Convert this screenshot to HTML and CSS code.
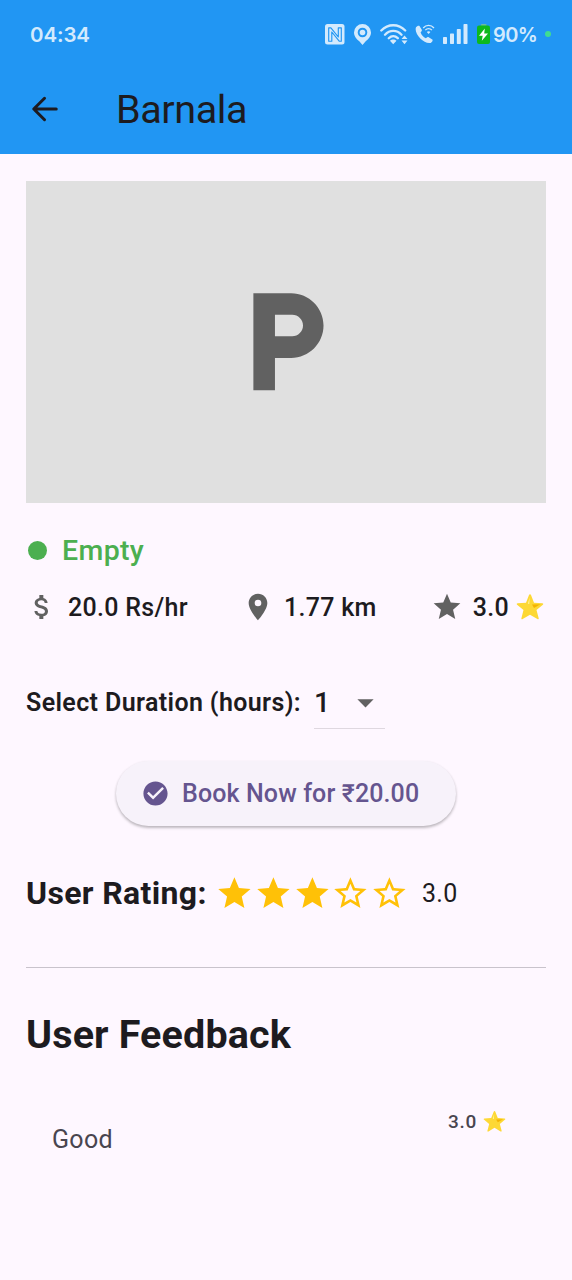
FILE: index.html
```html
<!DOCTYPE html>
<html lang="en">
<head>
<meta charset="utf-8">
<title>Barnala</title>
<link rel="stylesheet" href="styles.css">
</head>
<body>
<svg class="defs" width="0" height="0" aria-hidden="true">
  <defs>
    <symbol id="star" viewBox="0 0 24 24"><path d="M12 17.27 18.18 21l-1.64-7.03L22 9.24l-7.19-.61L12 2 9.19 8.63 2 9.24l5.46 4.73L5.82 21z"/></symbol>
    <symbol id="star-outline" viewBox="0 0 24 24"><path d="m22 9.24-7.19-.62L12 2 9.19 8.63 2 9.24l5.46 4.73L5.82 21 12 17.27 18.18 21l-1.63-7.03L22 9.24zM12 15.4l-3.76 2.27 1-4.28-3.32-2.88 4.38-.38L12 6.1l1.71 4.04 4.38.38-3.32 2.88 1 4.28L12 15.4z"/></symbol>
    <symbol id="gold-star" viewBox="0 0 28 28">
      <path d="M14 1.2c.5 0 .8.3 1 .8l3 7.7 8.3.5c1 .1 1.3.9.6 1.5l-6.4 5.3 2.2 8.2c.2.9-.5 1.400-1.300.9L14 21.700l-7.300 4.400c-.8.5-1.600 0-1.300-.9l2.100-8.200L1.100 11.700c-.7-.6-.4-1.400.6-1.500l8.300-.5 3-7.700c.2-.5.5-.8 1-.8z" fill="#fdd835"/>
      <path d="M16 11.500 24.500 11.200 18 15z" fill="#f4b400"/>
      <path d="m13.600 4.500-1.700 6.200 1.400.2z" fill="#fff59d"/>
    </symbol>
  </defs>
</svg>
<header class="header">
  <div class="status">
    <span class="time">04:34</span>
    <div class="status-icons">
      <svg class="nfc" width="20" height="21" viewBox="0 0 20 21"><rect width="19.500" height="20.500" rx="2.500" fill="#d3eafd"/><path d="M6.800 17.200H3.700V3.800h2.200l7.400 9.200V3.800h3v13.400h-2.100L6.800 8z" fill="none" stroke="#2196f3" stroke-width="1.150" stroke-linejoin="round"/></svg>
      <svg class="place" width="17" height="21" viewBox="0 0 17 21"><path fill="#d3eafd" fill-rule="evenodd" d="M8.500 0A8.500 8.500 0 0 0 0 8.500c0 4 3 7 5.300 8.800L8.500 21l3.200-3.700C14 15.500 17 12.500 17 8.500A8.500 8.500 0 0 0 8.500 0zm0 3.700a4.800 4.800 0 1 1 0 9.600 4.800 4.800 0 0 1 0-9.600z"/><circle cx="8.500" cy="8.500" r="2.800" fill="#d3eafd"/></svg>
      <svg class="wifi" width="28" height="21" viewBox="0 0 28 21"><g fill="none" stroke="#d3eafd" stroke-width="2.300" stroke-linecap="round"><path d="M1.300 6.500C8-.5 18.500-.5 25.200 6.500M5 10.700c4.800-5 11.800-5 16.500 0M8.800 14.200c2.700-2.700 6.200-2.700 9 0"/></g><path d="m13.200 20.300-3.300-3.500c1.900-1.900 4.700-1.900 6.600 0zM21.500 15l3-3.600 3 3.600zM21.500 16.600l3 3.600 3-3.600z" fill="#d3eafd"/></svg>
      <svg class="call" width="20" height="20" viewBox="0 0 20 20"><path fill="#d3eafd" d="M1 3.200C2 1.800 3.800 1.200 4.500 2l2.300 3.700c.5.800-.7 2-1.200 2.600.8 2.700 2.600 4.800 5.300 6 .8-.7 2-1.700 2.800-1.100l3.600 2.300c.9.700-.2 2.500-1.500 3.400C9.500 20.800-1.500 9.800 1 3.200z"/><g fill="none" stroke="#d3eafd" stroke-width="1.300"><path d="M8.200 4c3-3.600 7.800-3.600 10.800 0M10.300 6.200c1.900-2.200 4.700-2.200 6.600 0"/></g><path d="m13.600 10-1.800-2c1-1 2.600-1 3.600 0z" fill="#d3eafd"/></svg>
      <svg class="signal" width="25" height="20" viewBox="0 0 25 20" fill="#d3eafd"><rect y="13" width="4" height="7" rx=".7"/><rect x="7" y="9.500" width="4" height="10.500" rx=".7"/><rect x="13.800" y="5" width="4" height="15" rx=".7"/><rect x="20.500" width="4" height="20" rx=".7"/></svg>
      <svg class="battery" width="13" height="20" viewBox="0 0 13 20"><rect x="4" width="5.500" height="2" rx=".8" fill="#69bca0"/><rect y="1.500" width="13" height="18.500" rx="2" fill="#0db91d"/><path d="M7.800 4.500 2 11.700h3.700l-.9 5L11 9.400H7.200z" fill="#fff"/></svg>
      <span class="percent">90%</span>
      <span class="privacy-dot"></span>
    </div>
  </div>
  <div class="appbar">
    <svg class="back" viewBox="0 0 24 24" fill="none" stroke="#1d1b20" stroke-width="1.900" stroke-linecap="round" stroke-linejoin="round"><path d="M19.100 12H5M11.700 5.200 4.900 12l6.800 6.800"/></svg>
    <h1 class="title">Barnala</h1>
  </div>
</header>
<main class="content">
  <div class="photo">
    <svg class="parking" viewBox="0 0 24 24"><path d="M13 3H6v18h4v-6h3c3.310 0 6-2.690 6-6s-2.690-6-6-6zm.2 8H10V7h3.200c1.100 0 2 .9 2 2s-.9 2-2 2z"/></svg>
  </div>
  <div class="availability"><span class="dot"></span><span class="empty">Empty</span></div>
  <div class="info">
    <div class="fact"><svg viewBox="0 0 24 24"><path d="M11.800 10.900c-2.270-.59-3-1.200-3-2.150 0-1.090 1.010-1.850 2.700-1.850 1.780 0 2.440.85 2.500 2.100h2.210c-.07-1.720-1.120-3.300-3.210-3.810V3h-3v2.160c-1.940.42-3.500 1.680-3.500 3.610 0 2.310 1.910 3.460 4.700 4.130 2.500.6 3 1.480 3 2.410 0 .69-.49 1.790-2.700 1.790-2.060 0-2.870-.92-2.980-2.100h-2.200c.12 2.190 1.760 3.420 3.680 3.830V21h3v-2.150c1.950-.37 3.500-1.500 3.500-3.550 0-2.840-2.430-3.810-4.700-4.400z"/></svg><span class="price">20.0 Rs/hr</span></div>
    <div class="fact"><svg viewBox="0 0 24 24"><path d="M12 2C8.130 2 5 5.130 5 9c0 5.250 7 13 7 13s7-7.750 7-13c0-3.870-3.130-7-7-7zm0 9.500a2.500 2.500 0 0 1 0-5 2.500 2.500 0 0 1 0 5z"/></svg><span class="distance">1.77 km</span></div>
    <div class="fact"><svg><use href="#star"/></svg><span class="score">3.0</span><svg class="gold"><use href="#gold-star"/></svg></div>
  </div>
  <div class="duration">
    <span class="label">Select Duration (hours):</span>
    <div class="select"><span>1</span><svg viewBox="0 0 24 24"><path d="m7 10 5 5 5-5z"/></svg></div>
  </div>
  <button class="book"><svg viewBox="0 0 24 24"><path d="M12 2C6.480 2 2 6.480 2 12s4.480 10 10 10 10-4.480 10-10S17.520 2 12 2zm-2 15-5-5 1.410-1.410L10 14.170l7.590-7.590L19 8l-9 9z"/></svg><span class="book-text">Book Now for ₹20.00</span></button>
  <div class="rating">
    <h2 class="rating-title">User Rating:</h2>
    <div class="stars">
      <svg><use href="#star"/></svg><svg><use href="#star"/></svg><svg><use href="#star"/></svg><svg><use href="#star-outline"/></svg><svg><use href="#star-outline"/></svg>
    </div>
    <span class="rating-value">3.0</span>
  </div>
  <hr class="divider">
  <h2 class="feedback-title">User Feedback</h2>
  <div class="feedback">
    <span class="comment">Good</span>
    <div class="feedback-score"><span>3.0</span><svg><use href="#gold-star"/></svg></div>
  </div>
</main>
</body>
</html>
```
FILE: styles.css
```css
* { box-sizing: border-box; }
body { margin: 0; min-height: 1280px; background: #fef7ff; color: #1d1b20; font-family: Roboto, "Liberation Sans", sans-serif; }
h1, h2 { margin: 0; }
svg { display: block; flex: none; }
span, h1, h2 { white-space: nowrap; }
.defs { position: absolute; }
.header { height: 154px; background: #2196f3; }
.status { height: 68px; padding: 0 21px 0 30px; display: flex; align-items: center; justify-content: space-between; color: #d3eafd; }
.time { font: 600 20.500px/24px Inter, sans-serif; letter-spacing: -.1px; padding-top: 1px; }
.status-icons { display: flex; align-items: center; }
.place { margin-left: 9px; }
.wifi { margin-left: 9px; }
.call { margin-left: 7px; }
.signal { margin-left: 8px; }
.battery { margin-left: 9px; }
.percent { width: 45px; margin-left: 3px; padding-top: 1px; font: 600 20px/24px Inter, sans-serif; letter-spacing: -.6px; }
.privacy-dot { width: 6px; height: 6px; margin-left: 7px; border-radius: 50%; background: #40dc91; }
.appbar { height: 84px; padding-left: 26px; display: flex; align-items: center; }
.back { width: 38px; height: 38px; margin-bottom: 2px; }
.title { margin-left: 52px; font-size: 39.500px; font-weight: 400; line-height: 50px; letter-spacing: -.4px; }
.content { padding: 27px 26px 0; }
.photo { height: 322px; background: #e0e0e0; display: grid; place-items: center; }
.parking { width: 129.500px; height: 129.500px; fill: #616161; }
.availability { height: 40px; margin-top: 27px; padding-left: 2px; display: flex; align-items: center; gap: 15px; }
.dot { width: 19px; height: 19px; border-radius: 50%; background: #4caf50; }
.empty { font-size: 28.500px; font-weight: 500; color: #4caf50; letter-spacing: .35px; }
.info { height: 34px; margin-top: 20px; display: flex; justify-content: space-between; align-items: center; }
.fact { display: flex; align-items: center; font-size: 25px; font-weight: 500; letter-spacing: .3px; }
.fact svg { width: 32px; height: 32px; margin-right: 10px; fill: #616161; }
.fact .gold { width: 28px; height: 28px; margin: 0 2px 0 7px; }
.duration { height: 52px; margin-top: 53px; display: flex; align-items: center; }
.label { width: 288px; padding-bottom: 2px; font-size: 25px; font-weight: 600; letter-spacing: .38px; }
.select { width: 71px; height: 52px; border-bottom: 1px solid #dfd8e0; display: flex; align-items: center; justify-content: space-between; font-size: 28.500px; font-weight: 500; }
.select svg { width: 39px; height: 39px; fill: #616161; }
.book { width: 340px; height: 65px; margin: 32px auto 0; padding: 0 0 0 25px; border: 0; border-radius: 33px; background: #f7f2fa; box-shadow: 0 2px 3px rgba(0,0,0,.22), 0 1px 3px rgba(0,0,0,.08); display: flex; align-items: center; gap: 12px; color: #65558f; font: 500 25px/32px Roboto, sans-serif; letter-spacing: .12px; }
.book svg { width: 29px; height: 29px; fill: currentColor; }
.rating { height: 40px; margin-top: 47px; display: flex; align-items: center; }
.rating-title { width: 189px; font-size: 32px; font-weight: 700; letter-spacing: .35px; }
.stars { display: flex; }
.stars svg { width: 38.800px; height: 38.800px; fill: #ffc107; }
.rating-value { margin-left: 13px; font-size: 25px; letter-spacing: .3px; }
.divider { height: 1px; margin: 54px 0 0; border: 0; background: #c9c3cc; }
.feedback-title { margin-top: 42px; font-size: 39.500px; line-height: 50px; font-weight: 700; letter-spacing: .15px; }
.feedback { height: 70px; margin-top: 45px; padding: 0 40px 0 26px; display: flex; justify-content: space-between; align-items: flex-start; color: #49454f; }
.comment { margin-top: 20px; font-size: 25px; line-height: 30px; letter-spacing: .3px; }
.feedback-score { display: flex; align-items: center; gap: 6px; height: 32px; font-size: 19px; font-weight: 500; letter-spacing: .7px; }
.feedback-score svg { width: 23px; height: 23px; }
```
